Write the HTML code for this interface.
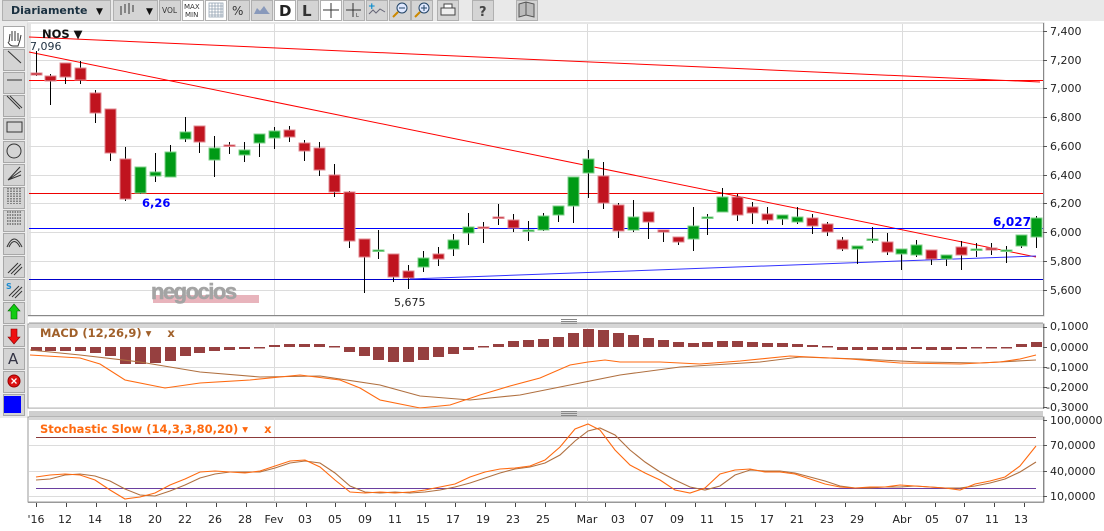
<!DOCTYPE html>
<html><head><meta charset="utf-8"><style>
html,body{margin:0;padding:0;background:#fff;width:1104px;height:531px;overflow:hidden;font-family:"DejaVu Sans","Liberation Sans",sans-serif}
svg{display:block}
</style></head><body>
<svg id="s" width="1104" height="531" viewBox="0 0 1104 531" xmlns="http://www.w3.org/2000/svg" font-family="DejaVu Sans, Liberation Sans, sans-serif">
<rect width="1104" height="531" fill="#fff"/>
<!-- top toolbar -->
<rect x="0" y="0" width="1104" height="21" fill="#e9e9e9"/>
<g fill="#d4d4d4" stroke="#b0b0b0">
<rect x="2.5" y="0.5" width="108" height="20"/>
<rect x="113.5" y="0.5" width="44" height="20"/>
<rect x="159.5" y="0.5" width="21" height="20"/>
<rect x="182.5" y="0.5" width="21" height="20" fill="#fff"/>
<rect x="205.5" y="0.5" width="21" height="20" fill="#fff"/>
<rect x="228.5" y="0.5" width="21" height="20"/>
<rect x="251.5" y="0.5" width="21" height="20"/>
<rect x="274.5" y="0.5" width="21" height="20" fill="#fff"/>
<rect x="297.5" y="0.5" width="21" height="20"/>
<rect x="320.5" y="0.5" width="21" height="20" fill="#fff"/>
<rect x="343.5" y="0.5" width="21" height="20"/>
<rect x="366.5" y="0.5" width="21" height="20"/>
<rect x="389.5" y="0.5" width="21" height="20"/>
<rect x="411.5" y="0.5" width="21" height="20"/>
<rect x="437.5" y="0.5" width="21" height="20"/>
<rect x="472.5" y="0.5" width="21" height="20"/>
<rect x="516.5" y="0.5" width="21" height="20"/>
</g>
<text x="11" y="14" font-size="11" font-weight="bold" fill="#1a3040">Diariamente</text>
<text x="96" y="14" font-size="9" fill="#111">▼</text>
<g stroke="#333" stroke-width="1"><line x1="121" y1="6" x2="121" y2="15"/><line x1="125" y1="4" x2="125" y2="13"/><line x1="129" y1="3" x2="129" y2="14"/><line x1="133" y1="5" x2="133" y2="12"/></g>
<text x="146" y="14" font-size="9" fill="#111">▼</text>
<text x="162" y="13" font-size="7.5" fill="#333">VOL</text>
<text x="184" y="9" font-size="7" fill="#333">MAX</text><text x="185" y="17" font-size="7" fill="#333">MIN</text>
<g stroke="#8899aa" stroke-width="0.7"><rect x="209" y="3" width="14" height="14" fill="none"/><line x1="212" y1="3" x2="212" y2="17"/><line x1="215" y1="3" x2="215" y2="17"/><line x1="218" y1="3" x2="218" y2="17"/><line x1="221" y1="3" x2="221" y2="17"/><line x1="209" y1="6" x2="223" y2="6"/><line x1="209" y1="9" x2="223" y2="9"/><line x1="209" y1="12" x2="223" y2="12"/><line x1="209" y1="15" x2="223" y2="15"/></g>
<text x="232" y="15" font-size="12" fill="#333">%</text>
<path d="M254 14 L257 8 L260 11 L264 6 L268 12 L270 14 Z" fill="#8899bb"/>
<text x="279" y="16" font-size="15" font-weight="bold" fill="#222">D</text>
<text x="302" y="16" font-size="15" font-weight="bold" fill="#333">L</text>
<g stroke="#333"><line x1="331" y1="3" x2="331" y2="18"/><line x1="323" y1="10" x2="339" y2="10"/><line x1="353" y1="3" x2="353" y2="17"/><line x1="346" y1="10" x2="361" y2="10"/></g>
<text x="356" y="17" font-size="5" fill="#333">L</text>
<path d="M369 14 L373 10 L376 13 L380 9 L385 12" stroke="#667" fill="none"/><text x="368" y="9" font-size="9" fill="#08c" font-weight="bold">+</text>
<circle cx="402" cy="8" r="5" fill="#dfe8ff" stroke="#246"/><line x1="398" y1="12" x2="393" y2="17" stroke="#c80" stroke-width="2"/><line x1="399" y1="8" x2="405" y2="8" stroke="#246"/>
<circle cx="424" cy="8" r="5" fill="#dfe8ff" stroke="#246"/><line x1="420" y1="12" x2="415" y2="17" stroke="#c80" stroke-width="2"/><line x1="421" y1="8" x2="427" y2="8" stroke="#246"/><line x1="424" y1="5" x2="424" y2="11" stroke="#246"/>
<rect x="441" y="8" width="14" height="7" fill="#eee" stroke="#444"/><rect x="444" y="4" width="8" height="4" fill="#fff" stroke="#444"/>
<text x="479" y="16" font-size="13" font-weight="bold" fill="#444">?</text>
<path d="M519 4 L519 17 L526 15 L534 17 L534 4 L526 2 Z M526 2 L526 15" fill="#bbb" stroke="#555"/>

<!-- left toolbar -->
<rect x="0" y="21" width="28" height="397" fill="#ececec"/>
<g id="lt" fill="#d4d4d4" stroke="#a8a8a8"></g>
<g stroke="#333" fill="none" stroke-width="1">
<path d="M9 42 L10 34 M12 41 L12 31 M15 41 L15 31 M18 41 L18 33 M8 42 Q10 46 13 46 L18 46 L20 40 L21 35"/>
<line x1="8" y1="51" x2="21" y2="63"/>
<line x1="7" y1="80" x2="22" y2="80"/>
<line x1="7" y1="96" x2="20" y2="109"/><line x1="10" y1="96" x2="22" y2="108"/>
<rect x="7" y="122" width="15" height="10"/>
<circle cx="14" cy="151" r="7"/>
<path d="M8 180 L20 167 M8 180 L21 171 M8 180 L21 175"/>
<path d="M8 188 V204 M11 188 V204 M14 188 V204 M17 188 V204 M20 188 V204" stroke-dasharray="1.5 1"/>
<path d="M7 212 H22 M7 215 H22 M7 218 H22 M7 221 H22 M7 224 H22" stroke-dasharray="1.5 1"/>
<path d="M7 247 Q14 231 22 247 M9 247 Q14 236 20 247"/>
<path d="M8 273 L18 263 M11 274 L21 264 M14 275 L22 267"/>
<path d="M9 296 L19 286 M12 297 L22 287 M15 298 L22 291"/>
</g>
<text x="6" y="289" font-size="8" font-weight="bold" fill="#1a8ad0">S</text>
<path d="M14 304 L20 311 L17 311 L17 319 L11 319 L11 311 L8 311 Z" fill="#1c1" stroke="#060" stroke-width="0.6"/>
<path d="M14 344 L20 337 L17 337 L17 329 L11 329 L11 337 L8 337 Z" fill="#e11" stroke="#800" stroke-width="0.6"/>
<text x="8" y="364" font-size="15" fill="#334">A</text>
<circle cx="14" cy="381" r="6" fill="#d11" stroke="#900"/><path d="M11.5 378.5 L16.5 383.5 M16.5 378.5 L11.5 383.5" stroke="#fff" stroke-width="1.3"/>
<rect x="4" y="396" width="17" height="17" fill="#00f"/>

<!-- main panel -->
<rect x="28" y="23" width="1016" height="293" fill="#fff" stroke="#ccc"/>
<rect x="28" y="23" width="3" height="293" fill="#e4e4e4"/>
<g id="grid" stroke="#dcdcdc" stroke-width="1"></g>
<line x1="28" y1="315.5" x2="1044" y2="315.5" stroke="#888"/>
<line x1="1043.5" y1="23" x2="1043.5" y2="316" stroke="#888"/>
<line x1="29" y1="37" x2="1040" y2="82" stroke="#f00" stroke-width="1"/>
<line x1="29" y1="80.5" x2="1043" y2="80.5" stroke="#f00"/>
<line x1="29" y1="52" x2="1036" y2="257" stroke="#f00"/>
<line x1="29" y1="193.5" x2="1043" y2="193.5" stroke="#e00"/>
<line x1="29" y1="228.5" x2="1043" y2="228.5" stroke="#00f"/>
<line x1="29" y1="279.5" x2="1043" y2="279.5" stroke="#00c"/>
<line x1="410" y1="279" x2="1036" y2="256" stroke="#33f"/>
<!-- watermark -->
<rect x="153" y="295" width="106" height="8" fill="#e8b4bc"/>
<text x="151" y="299" font-size="22" font-weight="bold" fill="#a4a4a4" stroke="#a4a4a4" stroke-width="0.6" letter-spacing="-1.5" font-family="Liberation Sans, sans-serif">negocios</text>
<g id="candles"></g>
<text x="42" y="38" font-size="11.5" font-weight="bold" fill="#111">NOS ▼</text>
<text x="30" y="50" font-size="11" fill="#234">7,096</text>
<text x="142" y="207" font-size="11.5" font-weight="bold" fill="#00f">6,26</text>
<text x="394" y="306" font-size="11" fill="#222">5,675</text>
<text x="993" y="226" font-size="12" font-weight="bold" fill="#00f">6,027</text>
<g id="pax" font-size="11" fill="#222"></g>

<!-- macd panel -->
<rect x="29" y="322" width="1014" height="6" fill="#cfcfcf"/>
<path d="M561 319.5 H577 M561 321.5 H577 M561 323.5 H577" stroke="#888"/>
<rect x="28" y="324" width="1016" height="84" fill="#fff" stroke="#999"/>
<rect x="29" y="324" width="1014" height="4" fill="#d6d6d6"/>
<g stroke="#dcdcdc"><line x1="29" y1="367.5" x2="1043" y2="367.5"/><line x1="29" y1="387.5" x2="1043" y2="387.5"/><line x1="29" y1="407.5" x2="1043" y2="407.5"/><line x1="587.5" y1="324" x2="587.5" y2="408"/><line x1="902.5" y1="324" x2="902.5" y2="408"/><line x1="274.5" y1="324" x2="274.5" y2="408"/></g>
<g id="hist" fill="#964040"></g>
<polyline fill="none" stroke="#b07040" stroke-width="1.1" points="30,350 80,355 140,362 200,372 260,377 320,376 380,385 420,396 470,400 520,395 570,385 620,375 680,367 760,362 800,357 860,359 920,362 980,363 1036,360"/>
<polyline fill="none" stroke="#ff6a10" stroke-width="1.1" points="30,355 80,358 100,364 125,380 165,388 200,383 250,380 300,375 340,380 360,388 380,400 420,408 450,405 480,395 510,386 540,378 570,365 588,362 605,360 620,362 660,362 700,364 740,361 790,356 850,359 900,363 960,364 1000,362 1020,359 1036,355"/>
<text x="40" y="337" font-size="11.5" font-weight="bold" fill="#a0602a">MACD (12,26,9) ▾ <tspan dx="12">x</tspan></text>
<line x1="1043.5" y1="324" x2="1043.5" y2="409" stroke="#888"/>

<!-- stoch panel -->
<rect x="29" y="411" width="1014" height="6" fill="#cfcfcf"/>
<path d="M561 411.5 H577 M561 413.5 H577 M561 415.5 H577" stroke="#888"/>
<rect x="28" y="417" width="1016" height="85" fill="#fff" stroke="#999"/>
<rect x="29" y="417" width="1014" height="3" fill="#d6d6d6"/>
<g stroke="#dcdcdc"><line x1="29" y1="445.5" x2="1043" y2="445.5"/><line x1="29" y1="471.5" x2="1043" y2="471.5"/><line x1="29" y1="496.5" x2="1043" y2="496.5"/><line x1="587.5" y1="418" x2="587.5" y2="502"/><line x1="902.5" y1="418" x2="902.5" y2="502"/><line x1="274.5" y1="418" x2="274.5" y2="502"/></g>
<line x1="36" y1="437.5" x2="1036" y2="437.5" stroke="#8b3a3a"/>
<line x1="36" y1="488.5" x2="1036" y2="488.5" stroke="#6a3fa0"/>
<polyline fill="none" stroke="#b07040" stroke-width="1.1" points="36,480 50,479 65,475 80,474 95,476 110,481 125,489 140,495 155,496 170,491 185,485 200,478 215,474 230,472 245,472 260,472 275,468 290,463 305,461 320,463 335,473 350,486 365,492 380,493 395,492 410,493 425,492 440,490 455,487 470,483 485,478 500,473 515,469 530,467 545,463 560,455 575,441 588,431 600,428 615,435 630,450 645,462 660,472 675,480 690,487 705,490 720,486 735,475 750,470 765,471 780,471 795,473 810,477 825,481 840,486 855,488 870,488 885,487 900,487 915,486 930,487 945,488 960,488 975,486 990,483 1005,479 1020,472 1036,462"/>
<polyline fill="none" stroke="#ff6a10" stroke-width="1.1" points="36,477 50,475 65,474 80,475 95,480 110,490 125,499 140,497 155,493 170,485 185,479 200,472 215,471 230,472 245,473 260,471 275,466 290,461 305,460 320,467 335,480 350,492 365,493 380,492 395,493 410,492 425,490 440,487 455,484 470,477 485,472 500,469 515,468 530,466 545,460 560,447 575,429 588,424 600,430 615,450 630,465 645,473 660,480 675,490 690,493 705,488 720,474 735,470 750,469 765,472 780,472 795,474 810,479 825,484 840,487 855,488 870,487 885,487 900,485 915,486 930,487 945,488 960,490 975,484 990,481 1005,477 1020,466 1036,446"/>
<text x="40" y="433" font-size="11.5" font-weight="bold" fill="#ff6a10">Stochastic Slow (14,3,3,80,20) ▾ <tspan dx="12">x</tspan></text>
<line x1="1043.5" y1="417" x2="1043.5" y2="503" stroke="#888"/>
<g font-size="11" fill="#222">
<text x="1050" y="330">0,1000</text><text x="1050" y="351">0,0000</text><text x="1046" y="371">-0,1000</text><text x="1046" y="391">-0,2000</text><text x="1046" y="411">-0,3000</text>
<text x="1050" y="424">100,0000</text><text x="1050" y="449">70,0000</text><text x="1050" y="475">40,0000</text><text x="1050" y="500">10,0000</text>
</g>
<g stroke="#555"><line x1="1043" y1="327.5" x2="1047" y2="327.5"/><line x1="1043" y1="347.5" x2="1047" y2="347.5"/><line x1="1043" y1="367.5" x2="1047" y2="367.5"/><line x1="1043" y1="387.5" x2="1047" y2="387.5"/><line x1="1043" y1="407.5" x2="1047" y2="407.5"/><line x1="1043" y1="420.5" x2="1047" y2="420.5"/><line x1="1043" y1="445.5" x2="1047" y2="445.5"/><line x1="1043" y1="471.5" x2="1047" y2="471.5"/><line x1="1043" y1="496.5" x2="1047" y2="496.5"/></g>
<line x1="28" y1="502.5" x2="1044" y2="502.5" stroke="#999"/>
<g id="dax" font-size="11" fill="#222" text-anchor="middle"></g>
</svg>
<script>
var NS="http://www.w3.org/2000/svg";
function el(p,t,a,txt){var e=document.createElementNS(NS,t);for(var k in a)e.setAttribute(k,a[k]);if(txt!==undefined)e.textContent=txt;document.getElementById(p).appendChild(e);return e;}
for(var i=0;i<17;i++){el("lt","rect",{x:3.5,y:26.5+i*23,width:21,height:21,fill:i==0?"#fff":"#d4d4d4"});}
var gy=[31,60,88,117,146,175,203,232,261,290];
gy.forEach(function(y){el("grid","line",{x1:29,y1:y+.5,x2:1043,y2:y+.5});});
[274.5,587.5,902.5].forEach(function(x){el("grid","line",{x1:x,y1:24,x2:x,y2:315});});
var lab=["7,400","7,200","7,000","6,800","6,600","6,400","6,200","6,000","5,800","5,600"];
gy.forEach(function(y,i){el("pax","text",{x:1050,y:y+4},lab[i]);el("pax","line",{x1:1043,y1:y+.5,x2:1047,y2:y+.5,stroke:"#555"});});
var C=[[36,73,75,51,76,0],[50,76,81,74,105,0],[65,63,77,63,84,0],[80,68,80,61,84,0],[95,93,113,90,123,0],[110,109,153,109,161,0],[125,159,199,147,201,0],[140,167,193,167,194,1],[155,172,176,153,182,1],[170,152,177,145,177,1],[185,132,139,117,142,1],[199,126,142,126,153,0],[214,148,160,136,177,1],[229,145,146,142,154,0],[244,150,155,142,162,1],[259,134,143,134,157,1],[274,131,138,127,149,1],[289,130,137,126,142,0],[304,143,151,140,161,0],[319,148,170,142,176,0],[334,175,192,164,197,0],[349,192,241,191,248,0],[364,239,257,239,293,0],[378,250,250,230,259,1],[393,254,277,254,282,0],[408,271,278,265,289,0],[423,258,267,251,272,1],[438,254,259,247,266,0],[453,240,249,234,256,1],[468,227,233,213,245,1],[483,227,228,222,243,0],[498,217,217,204,225,0],[513,220,228,214,232,0],[528,230,231,221,241,1],[543,216,230,213,231,1],[558,206,215,206,222,1],[573,177,206,177,223,1],[588,159,173,150,198,1],[603,176,203,162,209,0],[618,205,231,203,238,0],[633,217,230,200,232,1],[648,212,222,212,239,0],[663,230,232,230,242,0],[678,237,242,237,245,0],[693,226,239,207,251,1],[707,217,217,214,235,1],[722,197,212,188,212,1],[737,197,215,194,221,0],[752,207,213,202,224,0],[767,214,220,207,224,0],[782,215,219,215,225,1],[797,217,222,207,224,1],[812,218,226,214,234,0],[827,224,232,222,236,0],[842,240,249,237,251,0],[857,246,249,246,264,1],[872,239,239,227,243,1],[887,242,252,233,255,0],[901,249,254,249,270,1],[916,245,255,240,257,1],[931,250,259,250,265,0],[946,255,259,255,266,1],[961,247,255,241,270,0],[976,249,249,243,257,1],[991,248,250,243,255,0],[1006,250,250,246,263,1],[1021,235,246,235,248,1],[1036,218,237,216,248,1]];
C.forEach(function(c){
 el("candles","line",{x1:c[0]+.5,y1:c[3],x2:c[0]+.5,y2:c[4],stroke:"#000"});
 var h=Math.max(c[2]-c[1],1.5);
 el("candles","rect",{x:c[0]-5,y:c[1],width:11,height:h,fill:c[5]?"#009a16":"#c0141f",stroke:c[5]?"#7fd08a":"#e08890","stroke-width":1});
});
var H=[351,351,351,351,353,356,364,364,363,361,356,353,351,350,349,348,345,344,344,344,346,352,356,360,362,362,360,357,354,350,346,344,341,340,339,337,333,329,330,333,335,338,340,342,343,342,341,341,342,343,343,344,345,346,350,350,350,350,350,349,350,350,349,348,348,348,344,342];
H.forEach(function(v,i){var x=C[i][0];var t=Math.min(v,347),h=Math.max(Math.abs(v-347),1.5);el("hist","rect",{x:x-5,y:t,width:11,height:h});});
var D=[["'16",36],["12",65],["14",95],["18",125],["20",155],["22",185],["26",215],["28",245],["Fev",274],["03",305],["05",335],["09",365],["11",395],["15",423],["17",453],["19",483],["23",513],["25",543],["Mar",587],["03",618],["07",647],["09",677],["11",707],["15",737],["17",767],["21",797],["23",827],["29",857],["Abr",902],["05",932],["07",962],["11",992],["13",1021]];
D.forEach(function(d){el("dax","text",{x:d[1],y:523},d[0]);});
for(var x=36;x<1040;x+=29.95){el("dax","line",{x1:Math.round(x)+.5,y1:503,x2:Math.round(x)+.5,y2:507,stroke:"#444"});}
</script>
</body></html>
